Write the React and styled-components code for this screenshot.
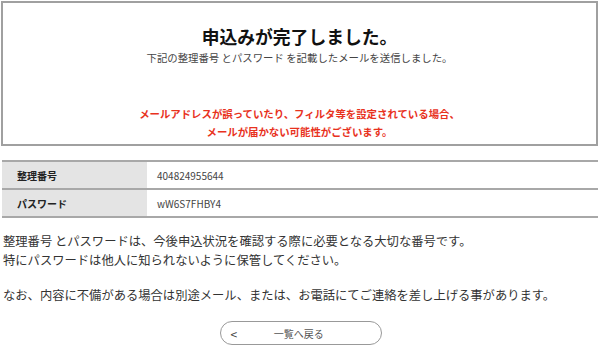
import React from "react";
import styled, { createGlobalStyle } from "styled-components";

const Global = createGlobalStyle`
  html, body { margin: 0; padding: 0; background: #fff; }
  body {
    font-family: "Noto Sans CJK JP", "Noto Sans", sans-serif;
    color: #333;
    width: 600px;
    height: 354px;
    overflow: hidden;
  }
`;

const Page = styled.div`
  padding: 1px 2px 0 1px;
  display: flex;
  flex-direction: column;
`;

const Notice = styled.section`
  border: 2px solid #a0a0a0;
  height: 145px;
  box-sizing: border-box;
  display: flex;
  flex-direction: column;
  align-items: center;
  padding-top: 20px;
`;

const Title = styled.h1`
  margin: 0;
  font-size: 17.8px;
  font-weight: 700;
  color: #111;
  line-height: 26px;
`;

const Sub = styled.p`
  margin: 0;
  font-size: 10.4px;
  color: #444;
  line-height: 17px;
`;

const Warn = styled.p`
  margin: 39px 0 0;
  font-size: 10.4px;
  font-weight: 700;
  color: #e8321e;
  line-height: 18px;
  text-align: center;
`;

const Table = styled.div`
  margin-top: 14px;
  margin-left: 1px;
  border-top: 2px solid #a8a8a8;
  display: grid;
  grid-template-columns: 145px 1fr;
`;

const Label = styled.div`
  background: #e4e4e4;
  font-size: 10px;
  font-weight: 700;
  color: #222;
  padding-left: 15px;
  height: 26px;
  display: flex;
  align-items: center;
  border-bottom: 2px solid #a8a8a8;
`;

const Value = styled.div`
  font-size: 10px;
  color: #444;
  padding-left: 10px;
  height: 26px;
  display: flex;
  align-items: center;
  border-bottom: 2px solid #a8a8a8;
`;

const Body = styled.div`
  margin-top: 14px;
  padding-left: 2px;
  font-size: 12.3px;
  color: #333;
  line-height: 19px;
`;

const Para = styled.p`
  margin: 0 0 16px;
`;

const BackWrap = styled.div`
  display: flex;
  justify-content: center;
`;

const BackButton = styled.button`
  width: 162px;
  height: 24px;
  margin-left: 2px;
  border: 1px solid #999;
  border-radius: 12px;
  background: #fff;
  display: flex;
  align-items: center;
  padding: 0 0 0 10px;
  font-family: inherit;
  font-size: 10px;
  color: #555;
  cursor: pointer;
`;

const Chevron = styled.span`
  font-size: 12px;
  color: #444;
`;

const BackLabel = styled.span`
  flex: 1;
  text-align: center;
  padding-right: 20px;
`;

export default function App() {
  return (
    <>
      <Global />
      <Page>
        <Notice>
          <Title>申込みが完了しました。</Title>
          <Sub>下記の整理番号 とパスワード を記載したメールを送信しました。</Sub>
          <Warn>
            メールアドレスが誤っていたり、フィルタ等を設定されている場合、
            <br />
            メールが届かない可能性がございます。
          </Warn>
        </Notice>
        <Table>
          <Label>整理番号</Label>
          <Value>404824955644</Value>
          <Label>パスワード</Label>
          <Value>wW6S7FHBY4</Value>
        </Table>
        <Body>
          <Para>
            整理番号 とパスワードは、今後申込状況を確認する際に必要となる大切な番号です。
            <br />
            特にパスワードは他人に知られないように保管してください。
          </Para>
          <Para>なお、内容に不備がある場合は別途メール、または、お電話にてご連絡を差し上げる事があります。</Para>
        </Body>
        <BackWrap>
          <BackButton>
            <Chevron>&lt;</Chevron>
            <BackLabel>一覧へ戻る</BackLabel>
          </BackButton>
        </BackWrap>
      </Page>
    </>
  );
}
